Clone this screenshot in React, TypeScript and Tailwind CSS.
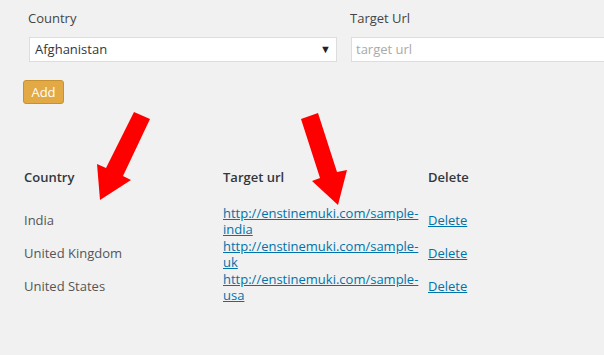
const rows = [
  { country: "India", url: "http://enstinemuki.com/sample-india" },
  { country: "United Kingdom", url: "http://enstinemuki.com/sample-uk" },
  { country: "United States", url: "http://enstinemuki.com/sample-usa" },
];

const Arrows = () => (
  <svg
    className="absolute left-0 top-0 pointer-events-none"
    width="604"
    height="355"
    viewBox="0 0 604 355"
  >
    {/* left arrow */}
    <polygon
      points="134,112 150,119 123,176 131,180 100,200 97,164 106,168"
      fill="#ff0000"
    />
    {/* right arrow */}
    <polygon
      points="301,119 318,113 337,172 347,170 338,205 312,181 320,178"
      fill="#ff0000"
    />
  </svg>
);

export default function App() {
  return (
    <div
      className="relative w-[604px] h-[355px] overflow-hidden bg-[#f1f1f1] text-[13px] text-[#444]"
      style={{ fontFamily: '"Open Sans", "Liberation Sans", sans-serif' }}
    >
      {/* form */}
      <div className="flex gap-[14px] pl-[29px] pt-[8px]">
        <div className="flex flex-col w-[308px]">
          <label className="leading-5 -ml-[1px] mb-[9px]">Country</label>
          <div className="flex items-center justify-between h-[25px] bg-white border border-[#ddd] pl-[5px] pr-[5px] text-[#32373c]">
            <span>Afghanistan</span>
            <span className="text-[11px] text-[#222]">▼</span>
          </div>
        </div>
        <div className="flex flex-col flex-1">
          <label className="leading-5 -ml-[1px] mb-[9px]">Target Url</label>
          <div className="flex items-center h-[25px] bg-white border border-r-0 border-[#ddd] pl-[4px] text-[#aaa]">
            target url
          </div>
        </div>
      </div>

      <div className="pl-[23px] mt-[18px]">
        <button className="h-[24px] w-[41px] rounded-[3px] bg-[#e2a944] border border-[#c8912f] text-white text-[13px] leading-none">
          Add
        </button>
      </div>

      {/* table */}
      <div className="pl-[24px] mt-[62px]">
        <div className="flex h-[24px] items-center font-semibold text-[#32373c]">
          <div className="w-[199px]">Country</div>
          <div className="w-[205px]">Target url</div>
          <div>Delete</div>
        </div>
        <div className="mt-[14px] flex flex-col">
          {rows.map((r) => (
            <div key={r.country} className="flex items-center h-[33px] text-[#555]">
              <div className="w-[199px]">{r.country}</div>
              <div className="w-[205px] leading-4">
                <a href="#" className="block w-[198px] text-[#0073aa] underline">
                  {r.url}
                </a>
              </div>
              <a href="#" className="text-[#0073aa] underline">
                Delete
              </a>
            </div>
          ))}
        </div>
      </div>

      <Arrows />
    </div>
  );
}
